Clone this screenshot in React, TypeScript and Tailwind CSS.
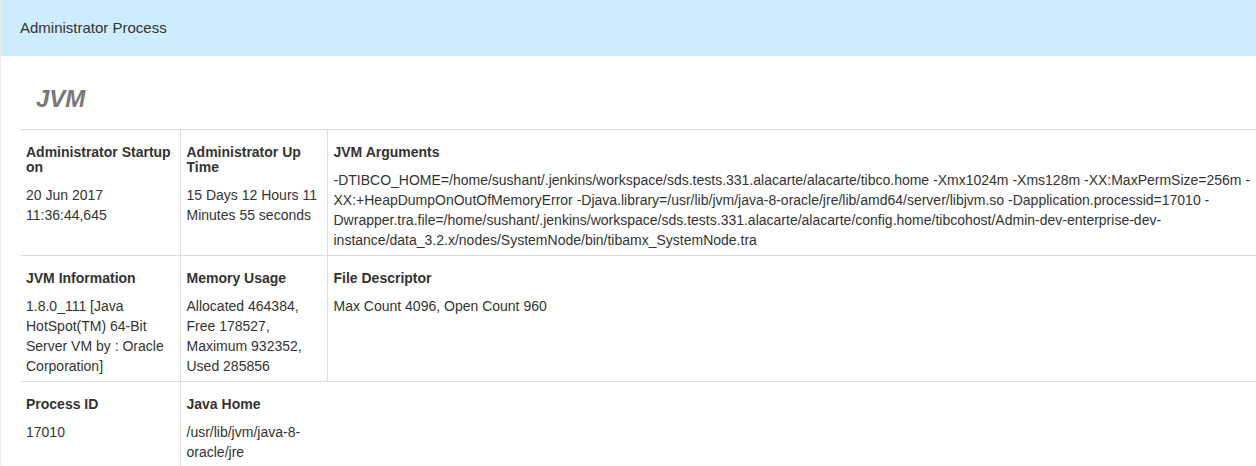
import type { ReactNode } from 'react'

const JVM_ARGS =
  '-DTIBCO_HOME=/home/sushant/.jenkins/workspace/sds.tests.331.alacarte/alacarte/tibco.home -Xmx1024m -Xms128m -XX:MaxPermSize=256m -XX:+HeapDumpOnOutOfMemoryError -Djava.library=/usr/lib/jvm/java-8-oracle/jre/lib/amd64/server/libjvm.so -Dapplication.processid=17010 -Dwrapper.tra.file=/home/sushant/.jenkins/workspace/sds.tests.331.alacarte/alacarte/config.home/tibcohost/Admin-dev-enterprise-dev-instance/data_3.2.x/nodes/SystemNode/bin/tibamx_SystemNode.tra'

function Cell({ title, children, first }: { title: string; children: ReactNode; first?: boolean }) {
  return (
    <td className={'align-top px-[6px] py-[5px] ' + (first ? '' : 'border-l border-[#dddddd]')}>
      <h5 className="my-[10px] text-[14px] leading-[15px] font-bold text-[#333333]">{title}</h5>
      <div className="text-[14px] leading-[20px] text-[#333333] break-words">{children}</div>
    </td>
  )
}

export default function App() {
  return (
    <div className="w-[1256px] h-[466px] overflow-hidden bg-white" style={{ fontFamily: '"Liberation Sans", Arial, sans-serif' }}>
      <div className="w-[1290px] h-[468px] border border-t-0 border-[#ececec] rounded-b-[4px] overflow-hidden">
        <div className="h-[56px] bg-[#cdecfd] pl-[19px] flex items-center text-[15px] text-[#333333]">
          Administrator Process
        </div>
        <div className="pl-[19px]">
          <h3 className="pl-[16px] pt-[30px] pb-[17px] text-[24px] leading-[26px] font-bold italic text-[#777777]">JVM</h3>
          <table className="w-[1271px] border-collapse table-fixed">
            <colgroup>
              <col className="w-[160px]" />
              <col className="w-[147px]" />
              <col />
            </colgroup>
            <tbody>
              <tr className="border-t border-[#dddddd]">
                <Cell title="Administrator Startup on" first>
                  20 Jun 2017 11:36:44,645
                </Cell>
                <Cell title="Administrator Up Time">15 Days 12 Hours 11 Minutes 55 seconds</Cell>
                <Cell title="JVM Arguments">{JVM_ARGS}</Cell>
              </tr>
              <tr className="border-t border-[#dddddd]">
                <Cell title="JVM Information" first>
                  1.8.0_111 [Java HotSpot(TM) 64-Bit Server VM by : Oracle Corporation]
                </Cell>
                <Cell title="Memory Usage">Allocated 464384, Free 178527, Maximum 932352, Used 285856</Cell>
                <Cell title="File Descriptor">Max Count 4096, Open Count 960</Cell>
              </tr>
              <tr className="border-t border-[#dddddd]">
                <Cell title="Process ID" first>
                  17010
                </Cell>
                <Cell title="Java Home">/usr/lib/jvm/java-8-oracle/jre</Cell>
              </tr>
            </tbody>
          </table>
        </div>
      </div>
    </div>
  )
}
